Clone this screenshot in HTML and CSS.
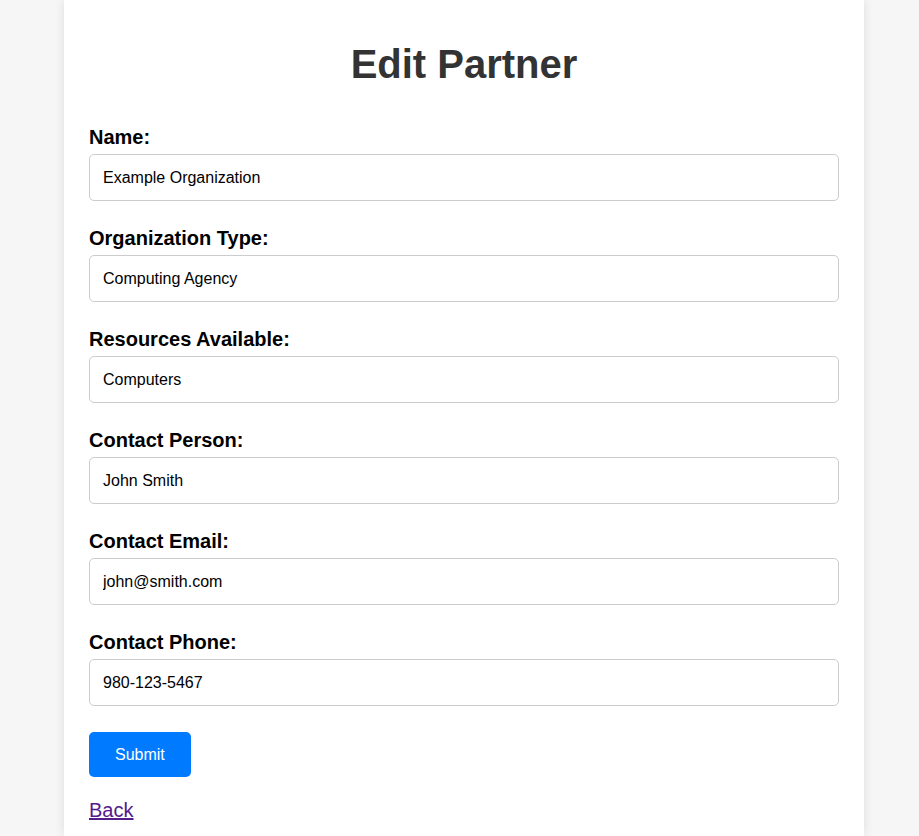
FILE: index.html
```html
<!DOCTYPE html>
<html lang="en">
<head>
<meta charset="utf-8">
<title>Edit Partner</title>
<link rel="stylesheet" href="styles.css">
</head>
<body>
<div class="card">
  <h1 class="title">Edit Partner</h1>
  <form class="form">
    <div class="field">
      <label class="label" for="name">Name:</label>
      <input class="input" id="name" type="text" value="Example Organization">
    </div>
    <div class="field">
      <label class="label" for="type">Organization Type:</label>
      <input class="input" id="type" type="text" value="Computing Agency">
    </div>
    <div class="field">
      <label class="label" for="res">Resources Available:</label>
      <input class="input" id="res" type="text" value="Computers">
    </div>
    <div class="field">
      <label class="label" for="person">Contact Person:</label>
      <input class="input" id="person" type="text" value="John Smith">
    </div>
    <div class="field">
      <label class="label" for="email">Contact Email:</label>
      <input class="input" id="email" type="text" value="john@smith.com">
    </div>
    <div class="field">
      <label class="label" for="phone">Contact Phone:</label>
      <input class="input" id="phone" type="text" value="980-123-5467">
    </div>
    <div class="actions">
      <button class="submit" type="button">Submit</button>
    </div>
  </form>
  <a class="back" href="#">Back</a>
</div>
</body>
</html>
```

FILE: styles.css
```css
html, body {
  margin: 0;
  padding: 0;
}
body {
  background: #f6f6f6;
  font-family: "Liberation Sans", Arial, sans-serif;
  color: #000;
}
.card {
  box-sizing: border-box;
  width: 800px;
  margin: 0 55px 0 64px;
  min-height: 836px;
  background: #fff;
  padding: 41px 25px 0 25px;
  box-shadow: 0 0 10px rgba(0, 0, 0, 0.1);
}
.title {
  margin: 0 0 39px 0;
  font-size: 40px;
  line-height: 46px;
  font-weight: bold;
  color: #333;
  text-align: center;
}
.form {
  display: flex;
  flex-direction: column;
  gap: 26px;
}
.field {
  display: flex;
  flex-direction: column;
  gap: 6px;
}
.label {
  font-size: 20px;
  line-height: 22px;
  font-weight: bold;
  color: #000;
}
.input {
  box-sizing: border-box;
  width: 100%;
  height: 47px;
  margin: 0;
  padding: 0 13px;
  border: 1px solid #ccc;
  border-radius: 5px;
  font-family: "Liberation Sans", Arial, sans-serif;
  font-size: 16px;
  color: #000;
  background: #fff;
}
.actions {
  display: flex;
}
.submit {
  box-sizing: border-box;
  height: 45px;
  padding: 0 26px;
  border: none;
  border-radius: 5px;
  background: #007bff;
  color: #fff;
  font-family: "Liberation Sans", Arial, sans-serif;
  font-size: 16px;
}
.back {
  display: inline-block;
  margin-top: 22px;
  font-size: 20px;
  line-height: 23px;
  color: #551a8b;
  text-decoration: underline;
}
```
